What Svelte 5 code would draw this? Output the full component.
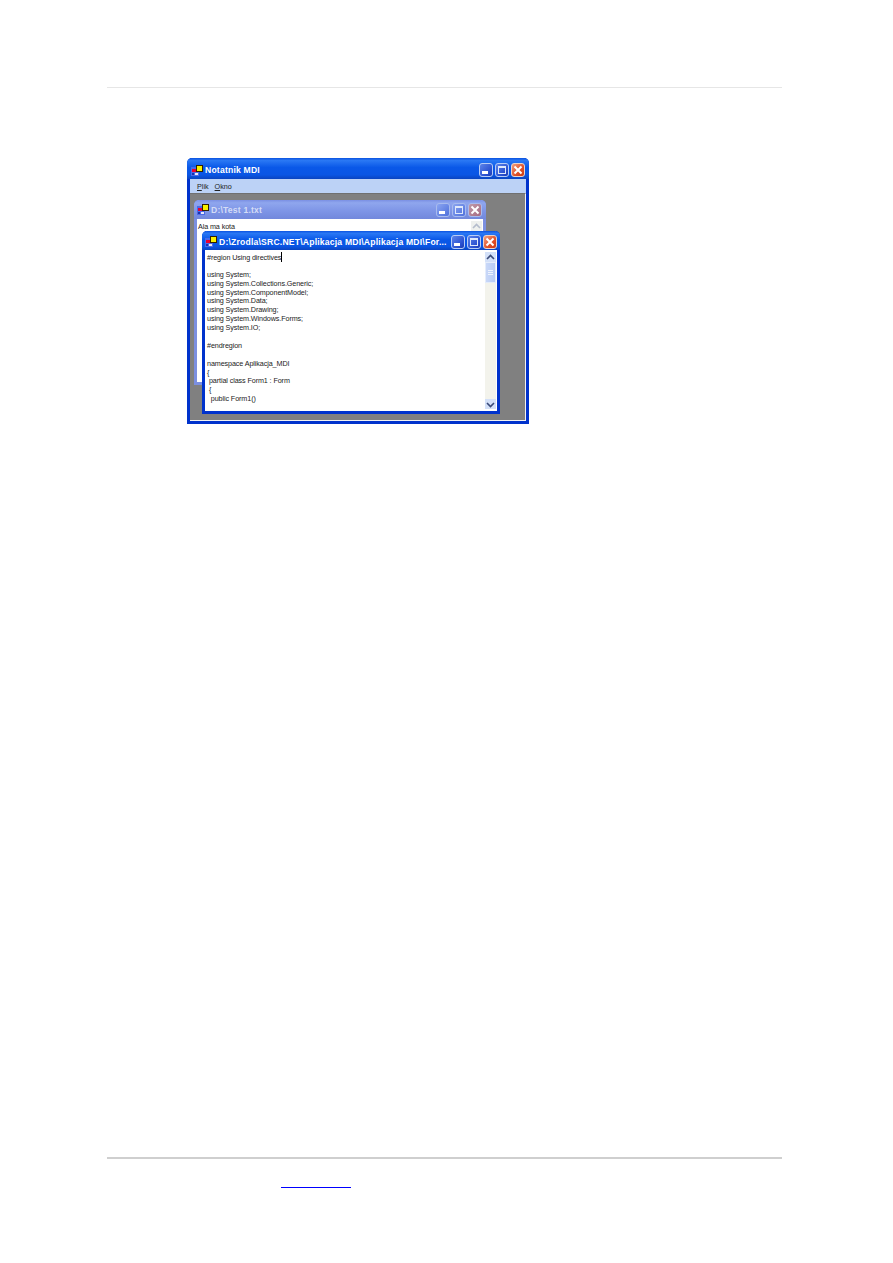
<script>
  const codeLines = [
    "#region Using directives",
    "",
    "using System;",
    "using System.Collections.Generic;",
    "using System.ComponentModel;",
    "using System.Data;",
    "using System.Drawing;",
    "using System.Windows.Forms;",
    "using System.IO;",
    "",
    "#endregion",
    "",
    "namespace Aplikacja_MDI",
    "{",
    " partial class Form1 : Form",
    " {",
    "  public Form1()",
  ];
</script>

{#snippet appIcon()}
  <svg class="appicon" width="12" height="11" viewBox="0 0 12 11">
    <rect x="0" y="2" width="8" height="9" fill="#4a6ae8" />
    <rect x="1" y="4" width="5" height="3" fill="#e80030" />
    <rect x="1" y="8" width="2" height="2" fill="#1830b0" />
    <rect x="4" y="8" width="3" height="2" fill="#e8e8f8" />
    <rect x="5" y="0" width="7" height="7" fill="#302000" />
    <rect x="6" y="1" width="5" height="5" fill="#f8f000" />
  </svg>
{/snippet}

{#snippet buttons()}
  <div class="btns">
    <div class="btn"><span class="min"></span></div>
    <div class="btn"><span class="max"></span></div>
    <div class="btn close">
      <svg width="14" height="14" viewBox="0 0 14 14">
        <path d="M3.5 3.5l7 7M10.5 3.5l-7 7" stroke="#fff" stroke-width="2" fill="none" />
      </svg>
    </div>
  </div>
{/snippet}

<div class="page">
  <div class="top-rule"></div>

  <div class="shot">
    <div class="xp main">
      <div class="title">
        {@render appIcon()}
        <span class="caption">Notatnik MDI</span>
        {@render buttons()}
      </div>
      <div class="menu">
        <span><u>P</u>lik</span>
        <span><u>O</u>kno</span>
      </div>
      <div class="mdi">
        <div class="xp child back">
          <div class="title small">
            {@render appIcon()}
            <span class="caption">D:\Test 1.txt</span>
            {@render buttons()}
          </div>
          <div class="body">
            <div class="text">Ala ma kota</div>
            <div class="sb">
              <div class="arrow faded">
                <svg width="9" height="7" viewBox="0 0 9 7"><path d="M1 5l3.5-3.5L8 5" stroke="#b4bccc" stroke-width="1.6" fill="none" /></svg>
              </div>
            </div>
          </div>
        </div>

        <div class="xp child front">
          <div class="title small">
            {@render appIcon()}
            <span class="caption">D:\Zrodla\SRC.NET\Aplikacja MDI\Aplikacja MDI\For...</span>
            {@render buttons()}
          </div>
          <div class="body">
            <div class="text code">
              {#each codeLines as line, i}
                <div class="line">{line}{#if i === 0}<span class="caret"></span>{/if}</div>
              {/each}
            </div>
            <div class="sb">
              <div class="arrow">
                <svg width="9" height="7" viewBox="0 0 9 7"><path d="M1 5l3.5-3.5L8 5" stroke="#3a4a78" stroke-width="1.6" fill="none" /></svg>
              </div>
              <div class="thumb"><i></i><i></i><i></i></div>
              <div class="track"></div>
              <div class="arrow">
                <svg width="9" height="7" viewBox="0 0 9 7"><path d="M1 2l3.5 3.5L8 2" stroke="#3a4a78" stroke-width="1.6" fill="none" /></svg>
              </div>
            </div>
          </div>
        </div>
      </div>
    </div>
  </div>

  <div class="bottom-rule"></div>
  <div class="footer"><a href="#top" class="link" aria-label="link"></a></div>
</div>

<style>
  :global(body) {
    margin: 0;
    background: #fff;
  }
  .page {
    height: 1263px;
    padding: 87px 111px 0 107px;
    box-sizing: border-box;
    display: flex;
    flex-direction: column;
    font-family: "Liberation Sans", Arial, sans-serif;
    overflow: hidden;
  }
  .top-rule {
    height: 1px;
    background: #e6e6e6;
  }
  .shot {
    padding: 70px 0 0 80px;
    flex: 1;
  }
  .xp {
    box-sizing: border-box;
    border: 3px solid #0032cc;
    border-top: 0;
    border-radius: 5px 5px 0 0;
    display: flex;
    flex-direction: column;
  }
  .main {
    width: 342px;
    height: 266px;
    background: #0032cc;
  }
  .title {
    height: 21px;
    flex: none;
    box-sizing: border-box;
    margin: 0 -3px;
    padding: 3px 4px 0 4px;
    display: flex;
    align-items: center;
    gap: 1px;
    border-radius: 5px 5px 0 0;
    background: linear-gradient(#0a52e0, #2a78f4 12%, #0a58e8 45%, #0a56e4 80%, #0a44c0);
  }
  .title.small {
    height: 19px;
    padding: 0 4px 0 3px;
  }
  .front .title.small {
    padding: 2px 3px 0 3px;
  }
  .caption {
    flex: 1;
    min-width: 0;
    white-space: nowrap;
    overflow: hidden;
    color: #fff;
    font-size: 8.6px;
    font-weight: 700;
    letter-spacing: 0.2px;
    padding-left: 1px;
  }
  .appicon {
    flex: none;
  }
  .btns {
    display: flex;
    gap: 2px;
    flex: none;
  }
  .btn {
    width: 14px;
    height: 14px;
    box-sizing: border-box;
    border: 1px solid #b8ccf6;
    border-radius: 3px;
    background: linear-gradient(135deg, #5c84ea, #2a50d0 70%, #1c3cb0);
    position: relative;
  }
  .btn.close {
    background: linear-gradient(135deg, #f0a080, #e05028 60%, #c83a14);
    border-color: #e8d4cc;
  }
  .btn.close svg {
    position: absolute;
    left: -1px;
    top: -1px;
  }
  .min {
    position: absolute;
    left: 2px;
    bottom: 2px;
    width: 6px;
    height: 3px;
    background: #fff;
  }
  .max {
    position: absolute;
    left: 2px;
    top: 2px;
    width: 8px;
    height: 8px;
    box-sizing: border-box;
    border: 1px solid #dfe8fb;
    border-top-width: 2px;
  }
  .menu {
    height: 14px;
    flex: none;
    display: flex;
    gap: 6px;
    padding: 0 7px;
    align-items: center;
    background: #bcd2f6;
    font-size: 7.2px;
    color: #222;
  }
  .mdi {
    flex: 1;
    position: relative;
    background: #808080;
    border: solid #f2f2f2;
    border-width: 1px 1px 1px 0;
    border-top-color: #707070;
  }
  .child {
    position: absolute;
    background: #fff;
  }
  .back {
    left: 4px;
    top: 6px;
    width: 292px;
    height: 185px;
    border-color: #7b8fe0;
  }
  .back .title {
    background: linear-gradient(#7b90e4, #8fa6ee 15%, #7d94e6 60%, #7288dc);
  }
  .back .caption {
    color: #d4dcf6;
  }
  .back .btn {
    background: linear-gradient(135deg, #8aa4f0, #4e70dc);
    border-color: #a8bbee;
  }
  .back .btn.close {
    background: linear-gradient(135deg, #c09aa8, #a66a82);
  }
  .front {
    left: 12px;
    top: 37px;
    width: 298px;
    height: 183px;
  }
  .body {
    flex: 1;
    display: flex;
    min-height: 0;
    background: #fff;
    overflow: hidden;
  }
  .text {
    flex: 1;
    min-width: 0;
    padding: 3px 0 0 1px;
    font-size: 7.2px;
    letter-spacing: -0.1px;
    color: #222;
    white-space: pre;
  }
  .code {
    padding: 2px 0 0 2px;
  }
  .line {
    height: 8.9px;
    line-height: 9px;
  }
  .caret {
    display: inline-block;
    width: 1px;
    height: 10px;
    background: #000;
    vertical-align: -2px;
  }
  .sb {
    width: 11px;
    flex: none;
    display: flex;
    flex-direction: column;
    background: #f3f3ec;
    margin: 2px 1px 2px 0;
  }
  .arrow {
    height: 10px;
    flex: none;
    background: #d3e0f8;
    display: flex;
    align-items: center;
    justify-content: center;
  }
  .arrow.faded {
    background: #eef0ee;
  }
  .thumb {
    height: 21px;
    flex: none;
    background: linear-gradient(90deg, #c9d8f8, #b7cbf5);
    border: 1px solid #e4ecfb;
    box-sizing: border-box;
    display: flex;
    flex-direction: column;
    gap: 1px;
    align-items: center;
    justify-content: center;
  }
  .thumb i {
    display: block;
    width: 5px;
    height: 1px;
    background: #eef3fd;
  }
  .track {
    flex: 1;
  }
  .bottom-rule {
    height: 2px;
    background: #cfcfcf;
    flex: none;
  }
  .footer {
    height: 104px;
    flex: none;
    padding: 28px 0 0 174px;
    box-sizing: border-box;
  }
  .link {
    display: block;
    width: 70px;
    height: 1px;
    background: #0000ff;
  }
</style>
